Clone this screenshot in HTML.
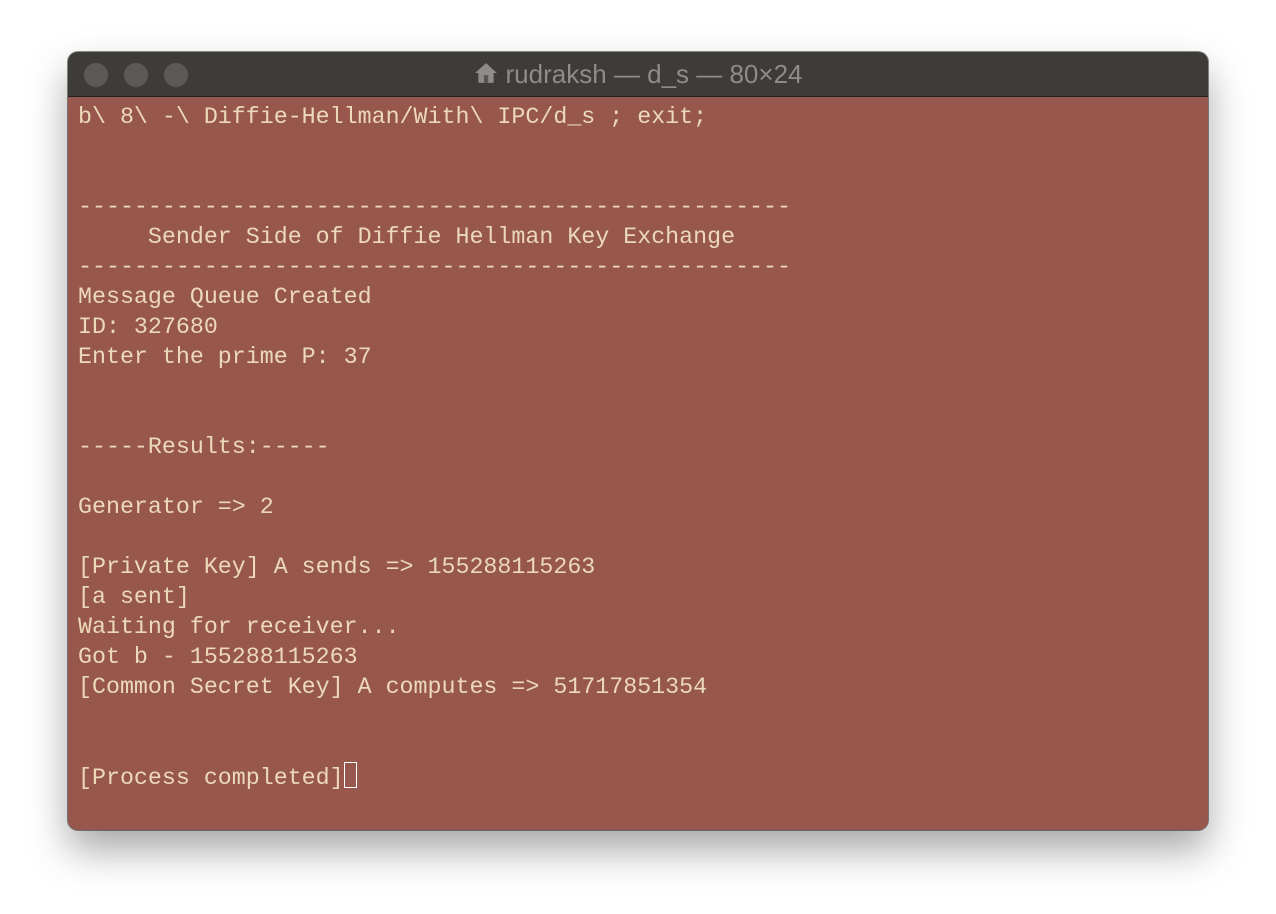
<!DOCTYPE html>
<html><head><style>
html,body{margin:0;padding:0;background:#fff;width:1276px;height:914px;overflow:hidden}
.win{position:absolute;left:68px;top:52px;width:1140px;height:778px;border-radius:10px;overflow:hidden;background:#98574c;box-shadow:0 20px 40px rgba(0,0,0,.35),0 0 0 1px rgba(0,0,0,.45)}
.tb{height:44px;background:#3e3c38;border-bottom:1px solid #222;position:relative}
.c{position:absolute;top:11px;width:24px;height:24px;border-radius:50%;background:#5c5a57}
.title{position:absolute;left:0;right:0;top:7px;text-align:center;font:26px "Liberation Sans",sans-serif;color:#8f8c88}
pre{margin:0;position:absolute;left:10px;top:50px;font:23.3px/30px "Liberation Mono",monospace;color:#ebd9b9}
.cur{display:inline-block;width:11px;height:24px;border:1.5px solid #fff;vertical-align:-4px}
</style></head><body>
<div class="win">
<div class="tb">
<div class="c" style="left:16px"></div><div class="c" style="left:56px"></div><div class="c" style="left:96px"></div>
<div class="title"><svg width="24" height="24" viewBox="0 0 22 22" style="vertical-align:-2px;margin-right:8px"><path d="M11 2L1 11h3v9h14v-9h3z" fill="#8f8c88"/><rect x="9" y="13" width="4" height="7" fill="#555"/></svg>rudraksh — d_s — 80×24</div>
</div>
<pre>b\ 8\ -\ Diffie-Hellman/With\ IPC/d_s ; exit;


---------------------------------------------------
     Sender Side of Diffie Hellman Key Exchange
---------------------------------------------------
Message Queue Created
ID: 327680
Enter the prime P: 37


-----Results:-----

Generator => 2

[Private Key] A sends => 155288115263
[a sent]
Waiting for receiver...
Got b - 155288115263
[Common Secret Key] A computes => 51717851354


[Process completed]<span class="cur"></span></pre>
</div>
</body></html>
